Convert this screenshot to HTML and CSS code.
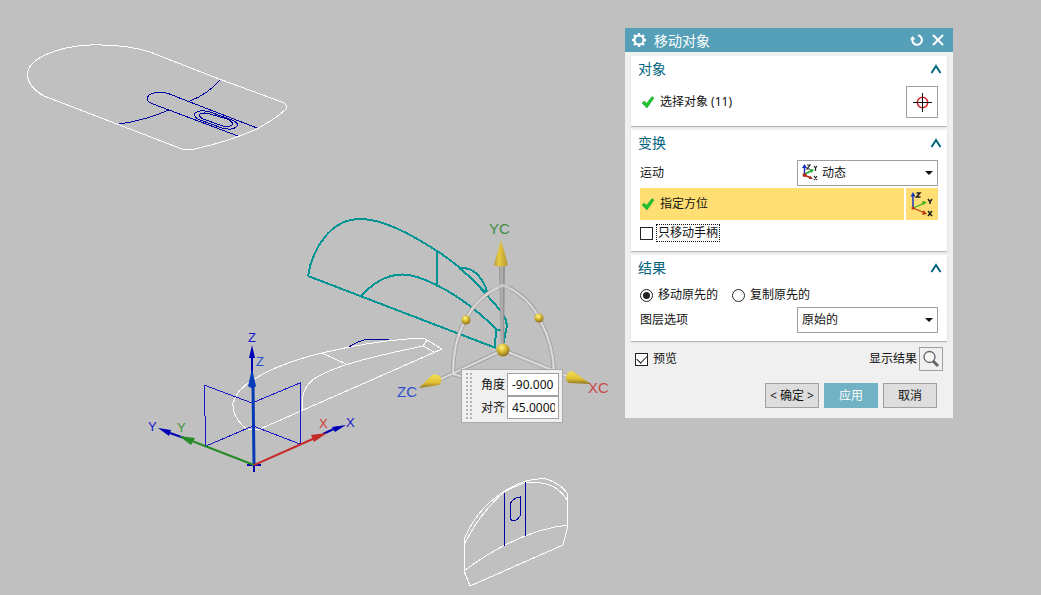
FILE: index.html
```html
<!DOCTYPE html>
<html lang="zh-CN">
<head>
<meta charset="utf-8">
<title>移动对象</title>
<link rel="stylesheet" href="styles.css">
</head>
<body>
<main class="viewport">
  <svg class="scene" viewBox="0 0 1041 595" preserveAspectRatio="xMinYMin meet" aria-hidden="true">
    <defs>
      <linearGradient id="gold" x1="0" x2="1"><stop offset="0" stop-color="#b8962a"/><stop offset=".35" stop-color="#e6ca45"/><stop offset="1" stop-color="#b8962c"/></linearGradient>
      <linearGradient id="goldV" x1="0" y1="0" x2="0" y2="1"><stop offset="0" stop-color="#f5e04e"/><stop offset=".6" stop-color="#e0bf35"/><stop offset="1" stop-color="#8f741c"/></linearGradient>
      <radialGradient id="ball" cx=".4" cy=".3" r=".7"><stop offset="0" stop-color="#fff3a0"/><stop offset=".35" stop-color="#e8cc3c"/><stop offset="1" stop-color="#8e711c"/></radialGradient>
    </defs>

    <!-- plate -->
    <g class="white">
      <path d="M150 52L219 79L282 102Q288 104 286 109Q278 117 257 129Q230 141 195 149Q188 150 182 149L117 124L44 96Q29 88 27 75Q28 63 45 55Q65 46 90 45Q125 44 150 52Z"/>
    </g>
    <g class="navy">
      <path d="M257 128L177 97Q168 93 162 92Q149 92 147 98Q147 102 153 104L238 136"/>
      <path d="M220 80Q208 94 190 101M169 110Q143 121 119 124"/>
      <path d="M210 112L232 120Q239 123 237 126Q233 131 222 128L200 120Q193 117 195 113Q199 109 210 112Z"/>
      <path d="M210 114L227 119Q234 122 232 125Q228 128 220 125L203 119Q198 116 200 114Q204 112 210 114Z"/>
    </g>

    <!-- selected wing -->
    <g class="teal">
      <path d="M308 276L496 348M308 276C312 250 330 219 360 219C384 219 412 235 437 251C464 268 480 287 500 310Q509 321 506 330L503 345"/>
      <path d="M437 251V287M361 296C380 275 400 271 417 277C450 288 476 309 496 329L495 348M496 330H502M459 268Q470 267 478 275Q485 283 487 292M459 268Q470 276 487 294"/>
    </g>

    <!-- original wing -->
    <g class="white">
      <path d="M425 339L442 349L260 429Q250 432 243 426Q232 415 233 403Q237 389 253 380Q277 364 322 353Q368 342 407 339Q418 338 425 339Z"/>
      <path d="M322 353L348 365M303 410C300 392 308 380 323 374C343 363 390 353 423 346L434 352M427 340L423 346"/>
    </g>
    <g class="navy"><path d="M349 347Q359 340 370 339H389"/></g>

    <!-- nose section -->
    <g class="white">
      <path d="M464 571V539Q478 507 505 491Q527 477 546 479Q560 483 567 493L568 525L563 545L470 586Z"/>
      <path d="M465 543Q480 513 504 492Q520 484 527 482Q545 482 554 487Q563 493 567 500M465 570Q520 530 568 525"/>
    </g>
    <g class="navy"><path d="M504 492L505 546M525 482V536M510 504Q513 498 520 497V516Q517 521 512 521L510 518Z"/></g>

    <!-- datum planes and coordinate axes -->
    <g class="blue"><path d="M204 385L252 403L300 383V444L253 426L206 446L204 385"/></g>
    <path d="M252 356V382M170 433L184 438M323 434L338 427M247 465H261M254 459V472" class="axis axis-blue"/>
    <path d="M253 386L254 464" class="axis axis-z"/>
    <path d="M254 465L192 441" class="axis axis-y"/>
    <path d="M254 465L315 438" class="axis axis-x"/>
    <path d="M252 345L249 358H255ZM158 428L171 430L169 436ZM346 425L332 427L335 432Z" fill="#0000b8"/>
    <path d="M252 369L248 386Q252 390 256 386Z" fill="#073db8"/>
    <path d="M179 436L195 438L191 445Z" fill="#268a28"/>
    <path d="M327 433L311 435L314 442Z" fill="#c52b29"/>
    <g class="axis-label">
      <text x="248" y="342" fill="#1717cf">Z</text><text x="256" y="366" fill="#2451cb">Z</text>
      <text x="148" y="431" fill="#1717cf">Y</text><text x="177" y="432" fill="#3d963d">Y</text>
      <text x="319" y="428" fill="#d0403b">X</text><text x="346" y="427" fill="#1717cf">X</text>
    </g>

    <!-- drag handles -->
    <g class="tube-edge"><path id="frame" d="M503 350L441 379M503 350L567 376M503 285Q477 296 465 321Q453 342 453 374L463 377M503 285Q529 296 540 320Q553 344 554 371"/></g>
    <use href="#frame" class="tube-body"/>
    <use href="#frame" class="tube-shine"/>
    <path d="M499 264H505L504 350H501Z" fill="#969292"/>
    <path d="M500 264H503V347H501Z" fill="#aeabab"/>
    <path d="M497 288Q503 283 509 288" class="tube-body"/>
    <path d="M501 240L494 265Q501 268 508 265Z" fill="url(#gold)"/>
    <path d="M419 388L432 375Q438 373 441 378Q442 383 439 385Z" fill="url(#goldV)"/>
    <path d="M591 384L572 371Q567 372 566 377Q566 382 569 383Z" fill="url(#goldV)"/>
    <circle cx="503" cy="350" r="6.5" fill="url(#ball)"/>
    <circle cx="466" cy="320" r="4.5" fill="url(#ball)"/>
    <circle cx="539" cy="318" r="4.5" fill="url(#ball)"/>
    <g class="handle-label">
      <text x="489" y="234" fill="#3f8f43">YC</text><text x="397" y="397" fill="#2c50cb">ZC</text><text x="588" y="393" fill="#cb4747">XC</text>
    </g>
  </svg>

  <form class="readout">
    <span class="grip"></span>
    <label for="angle">角度</label><input id="angle" type="text" value="-90.000">
    <label for="snap">对齐</label><input id="snap" type="text" value="45.0000">
  </form>

  <form class="dialog">
    <header class="titlebar">
      <svg width="16" height="16" viewBox="0 0 16 16" fill="none" stroke="#fff"><circle cx="8" cy="8" r="4.5" stroke-width="2"/><path stroke-width="2.4" d="M8 1V4M8 12V15M1 8H4M12 8H15M3 3L5 5M11 11L13 13M13 3L11 5M5 11L3 13"/></svg>
      <h1>移动对象</h1>
      <button type="button" class="plain" aria-label="重置"><svg width="14" height="14" viewBox="0 0 14 14" fill="none" stroke="#fff" stroke-width="2"><path d="M8 2.3A4.8 4.8 0 1 1 2.4 6"/><path d="M0 6.5L2.5 3L5.5 6.5Z" fill="#fff" stroke="none"/></svg></button>
      <button type="button" class="plain" aria-label="关闭"><svg width="14" height="14" viewBox="0 0 14 14" fill="none" stroke="#fff" stroke-width="2"><path d="M2 2L12 12M12 2L2 12"/></svg></button>
    </header>

    <section class="group">
      <header class="group-head"><h2>对象</h2><button type="button" class="plain" aria-label="折叠对象"><svg width="12" height="10" viewBox="0 0 12 10"><path class="chevron" d="M1.5 9L6 2L10.5 9"/></svg></button></header>
      <div class="row row-tall">
        <div class="status"><svg width="14" height="14" viewBox="0 0 14 14"><path d="M1 8L3.5 6L5.5 8.500L11 1.500L13 3L6 13Z" fill="#19c52c" stroke="#149821" stroke-width=".5"/></svg><span>选择对象 (11)</span></div>
        <button type="button" class="tool" aria-label="选择对象"><svg width="20" height="20" viewBox="0 0 20 20" fill="none"><circle cx="10.5" cy="10.5" r="5.2" stroke="#d32424" stroke-width="1.5"/><path d="M10.5 1V20M1 10.5H20" stroke="#111"/></svg></button>
      </div>
    </section>

    <section class="group">
      <header class="group-head"><h2>变换</h2><button type="button" class="plain" aria-label="折叠变换"><svg width="12" height="10" viewBox="0 0 12 10"><path class="chevron" d="M1.5 9L6 2L10.5 9"/></svg></button></header>
      <div class="row">
        <label for="motion">运动</label>
        <div class="picker with-icon">
          <select id="motion"><option>动态</option></select>
          <svg class="picker-icon" width="16" height="17" viewBox="0 0 16 17" fill="none"><path d="M2.5 11V3" stroke="#182cbd" stroke-width="1.5"/><path d="M0 4L2.5 0L5 4Z" fill="#182cbd"/><path d="M3 10L10 6.5" stroke="#21a72b" stroke-width="1.8"/><path d="M8 5L12 5.5L9.5 9Z" fill="#21a72b"/><path d="M2 11L9 14" stroke="#b52a1c" stroke-width="1.8"/><path d="M8 11.5L11 15L7 15Z" fill="#b52a1c"/><circle cx="2.5" cy="11" r="2" fill="#b52a1c"/><path d="M5 1H8L5 5H8M12 2L13.5 4L15 2M13.5 4V7M12 12L15 16M15 12L12 16" stroke="#222" stroke-width="1.2"/></svg>
          <span class="arrow"></span>
        </div>
      </div>
      <div class="row row-active">
        <div class="status"><svg width="14" height="14" viewBox="0 0 14 14"><path d="M1 8L3.5 6L5.5 8.5L11 1.5L13 3L6 13Z" fill="#19c52c" stroke="#149821" stroke-width=".5"/></svg><span>指定方位</span></div>
        <button type="button" class="tool tool-active" aria-label="指定方位"><svg width="24" height="26" viewBox="0 0 24 26" fill="none"><path d="M3 17V4" stroke="#1734c1" stroke-width="1.5"/><path d="M.5 5.500L3 1L5.500 5.500Z" fill="#1734c1"/><path d="M3 17L15 12" stroke="#36ae21" stroke-width="1.3"/><path d="M12 10L17 11L13 14Z" fill="#36ae21"/><path d="M3 17L15 22" stroke="#ba3b12" stroke-width="1.3"/><path d="M13.500 19L17 23L12 24Z" fill="#ba3b12"/><circle cx="3" cy="17" r="1.5" fill="#ba3b12"/><path d="M6.500 2H10L6.500 6H10.500M18 8L20 11L22 8M20 11V13M18 20L22 25M22 20L18 25" stroke="#222" stroke-width="1.5"/></svg></button>
      </div>
      <label class="choice"><input type="checkbox"><span class="focused">只移动手柄</span></label>
    </section>

    <section class="group">
      <header class="group-head"><h2>结果</h2><button type="button" class="plain" aria-label="折叠结果"><svg width="12" height="10" viewBox="0 0 12 10"><path class="chevron" d="M1.5 9L6 2L10.5 9"/></svg></button></header>
      <div class="choices">
        <label class="choice"><input type="radio" name="mode" checked><span>移动原先的</span></label>
        <label class="choice"><input type="radio" name="mode"><span>复制原先的</span></label>
      </div>
      <div class="row">
        <label for="layer">图层选项</label>
        <div class="picker"><select id="layer"><option>原始的</option></select><span class="arrow"></span></div>
      </div>
    </section>

    <div class="preview">
      <label class="choice"><input type="checkbox" checked><span>预览</span></label>
      <label class="show" for="show">显示结果</label>
      <button type="button" id="show" class="search" aria-label="显示结果"><svg width="18" height="18" viewBox="0 0 18 18" fill="none"><path d="M11 11L16 16" stroke="#666" stroke-width="3"/><circle cx="7.5" cy="7" r="5.5" fill="#f7f7f4" stroke="#62666a" stroke-width="1.3"/></svg></button>
    </div>
    <footer class="actions">
      <button type="button">&lt; 确定 &gt;</button>
      <button type="button" class="primary">应用</button>
      <button type="button">取消</button>
    </footer>
  </form>
</main>
</body>
</html>
```
FILE: styles.css
```css
* { box-sizing: border-box; }
body {
  margin: 0;
  background: #c0c0c0;
  color: #111;
  font: 12px/16px "Noto Sans", "Noto Sans CJK SC", sans-serif;
}
button, input, select { font: inherit; color: inherit; margin: 0; }
h1, h2 { margin: 0; font-weight: 400; font-size: 14px; line-height: 20px; }

.viewport { position: relative; min-height: 100vh; overflow: hidden; }
.scene { position: absolute; inset: 0; width: 100%; height: 100%; fill: none; }
.white, .navy, .blue, .teal { shape-rendering: crispEdges; }
.white { stroke: #fff; stroke-width: 1; }
.navy { stroke: #0000a0; stroke-width: 1; }
.blue { stroke: #1818c8; stroke-width: 1; }
.teal { stroke: #009494; stroke-width: 2; }
.axis { stroke-width: 2; }
.axis-blue { stroke: #0000b4; }
.axis-z { stroke: #0739b5; stroke-width: 3; }
.axis-y { stroke: #268a28; }
.axis-x { stroke: #c52b29; }
.tube-edge { stroke: #949090; stroke-width: 4; }
.tube-body { stroke: #c9c7c7; stroke-width: 3; }
.tube-shine { stroke: #e4e4e4; stroke-width: 1; }
.axis-label { font: 13px "Liberation Sans", sans-serif; }
.handle-label { font: 15px "Liberation Sans", sans-serif; }

.readout {
  position: absolute;
  left: 461px;
  top: 369px;
  display: grid;
  grid-template-columns: 14px 24px 52px;
  column-gap: 2px;
  align-items: center;
  padding: 3px;
  border: 1px solid #aaa;
  background: #f0f0f0;
}
.grip {
  grid-row: span 2;
  width: 8px;
  height: 48px;
  margin: -2px 0;
  background: radial-gradient(circle at 2px 2px, #b4b4b4 1px, transparent 1px) 0 0 / 4px 4px;
}
.readout input {
  width: 100%;
  height: 23px;
  padding: 0 3px 0 4px;
  border: 1px solid #a0a0a0;
  background: #fff;
}

.dialog {
  position: absolute;
  left: 625px;
  top: 28px;
  width: 328px;
  padding-bottom: 10px;
  background: #f0f0f0;
}
.titlebar {
  display: flex;
  align-items: center;
  gap: 7px;
  height: 24px;
  margin-bottom: 4px;
  padding: 0 8px 0 6px;
  background: #55a0b8;
  color: #fff;
}
.titlebar h1 { flex: 1; padding-top: 2px; }
.plain { display: flex; padding: 0; border: 0; background: none; }

.group {
  margin: 0 6px 4px;
  padding: 3px 9px 8px;
  background: #fff;
  box-shadow: 0 1px 1px #b8b8b8;
}
.group-head {
  display: flex;
  justify-content: space-between;
  align-items: center;
  margin: 0 -4px 7px -2px;
  color: #00647d;
}
.chevron { fill: none; stroke: #00647d; stroke-width: 2; }
.row { display: flex; justify-content: space-between; align-items: center; gap: 2px; height: 26px; }
.row-tall, .row-active { height: 32px; }
.row-active { margin: 2px 0 3px; }
.status { display: flex; flex: 1; align-items: center; gap: 5px; height: 32px; padding-left: 1px; }
.row-active .status { background: #ffdf74; }
.tool {
  display: flex;
  align-items: center;
  justify-content: center;
  width: 32px;
  height: 32px;
  padding: 0;
  border: 1px solid #a0a0a0;
  background: #fff;
}
.tool-active { border: 0; background: #ffdf74; }

.picker { position: relative; width: 141px; height: 26px; }
.picker select {
  width: 100%;
  height: 100%;
  padding: 0 20px 0 4px;
  border: 1px solid #a0a0a0;
  border-radius: 0;
  background: #fff;
  appearance: none;
}
.with-icon select { padding-left: 24px; }
.picker-icon { position: absolute; left: 5px; top: 4px; }
.arrow {
  position: absolute;
  right: 5px;
  top: 11px;
  border: 4px solid transparent;
  border-top-color: #111;
  border-bottom: 0;
  pointer-events: none;
}

.choices { display: flex; gap: 14px; padding-bottom: 2px; }
.choice { display: flex; align-items: center; gap: 5px; height: 20px; }
.choice input {
  display: grid;
  place-items: center;
  width: 13px;
  height: 13px;
  border: 1px solid #222;
  background: #fff;
  appearance: none;
}
.choice input[type="radio"] { border-radius: 50%; }
.choice input[type="radio"]:checked::before {
  content: "";
  width: 7px;
  height: 7px;
  border-radius: 50%;
  background: #222;
}
.choice input[type="checkbox"]:checked::before {
  content: "";
  width: 9px;
  height: 5px;
  margin-bottom: 2px;
  border: solid #222;
  border-width: 0 0 1px 1px;
  transform: rotate(-45deg);
}
.focused { margin-left: -1px; padding: 0 1px; outline: 1px dotted #111; }

.preview { display: flex; align-items: center; gap: 2px; padding: 2px 10px 0; }
.show { margin-left: auto; }
.search {
  display: flex;
  align-items: center;
  justify-content: center;
  width: 24px;
  height: 24px;
  padding: 0;
  border: 1px solid #a0a0a0;
  background: #f0f0f0;
}
.actions { display: flex; justify-content: flex-end; gap: 5px; padding: 12px 16px 0; }
.actions button {
  width: 54px;
  height: 25px;
  padding: 0;
  border: 1px solid #a0a0a0;
  background: #ddd;
  white-space: nowrap;
}
.actions .primary { border-color: #72b2c5; background: #72b2c5; color: #fff; }
```
